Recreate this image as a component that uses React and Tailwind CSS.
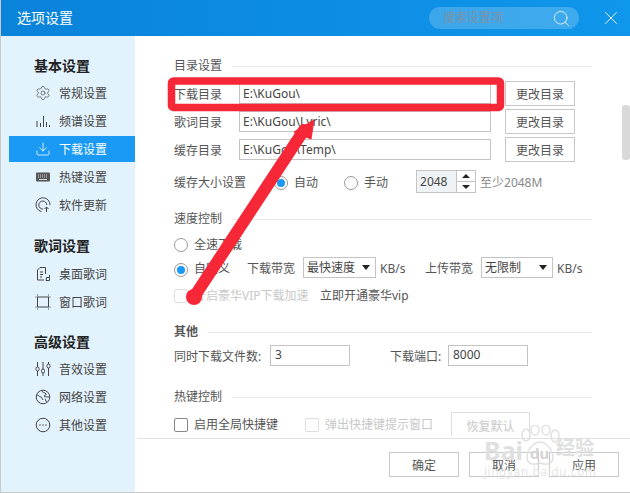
import { Settings, Download, Search, X } from "lucide-react";

const FONT = "font-['Noto_Sans','Noto_Sans_CJK_SC',sans-serif]";

function IconBars() {
  return (
    <svg width="16" height="16" viewBox="0 0 16 16" fill="none" stroke="currentColor">
      <path d="M2 8v6M5.5 10v4M8.5 3v11M11.5 9v5M14.5 12v2" />
    </svg>
  );
}

function IconKeyboard() {
  return (
    <svg width="16" height="16" viewBox="0 0 16 16" fill="none">
      <rect x="1" y="3.5" width="14" height="9" rx="1" fill="#555" />
      <path d="M3 6h10M3 8h10" stroke="#ddd" strokeDasharray="1 1" />
      <path d="M4 10.5h8" stroke="#ddd" />
    </svg>
  );
}

function IconUpdate() {
  return (
    <svg width="16" height="16" viewBox="0 0 16 16" fill="none" stroke="currentColor">
      <path d="M6.5 14.6A7 7 0 1 1 15 8" />
      <path d="M8 12A4 4 0 1 1 11.8 8" />
      <path d="M11.5 15v-5M9.5 12l2-2 2 2" />
    </svg>
  );
}

function IconLyric() {
  return (
    <svg width="16" height="16" viewBox="0 0 16 16" fill="none" stroke="currentColor">
      <path d="M9 14H2.5V4L5 1.5h5.5V8" />
      <path d="M5 6h3M5 8.5h3M5 11h2" />
      <path d="M11 14.5h3.5v-3h-3zM14.5 11V9" />
    </svg>
  );
}

function IconWindow() {
  return (
    <svg width="16" height="16" viewBox="0 0 16 16" fill="none" stroke="currentColor">
      <rect x="2.5" y="3" width="11" height="10" />
      <path d="M0.5 3h1M14.5 3h1M0.5 13h1M14.5 13h1M2.5 0.5v1M13.5 0.5v1M2.5 14.5v1M13.5 14.5v1" />
    </svg>
  );
}

function IconSliders() {
  return (
    <svg width="16" height="16" viewBox="0 0 16 16" fill="none" stroke="currentColor">
      <path d="M2.5 1v5M2.5 10v5M8 1v7M8 12v3M13.5 1v2M13.5 7v8" />
      <rect x="1" y="6" width="3" height="4" rx="1.5" />
      <rect x="6.5" y="8" width="3" height="4" rx="1.5" />
      <rect x="12" y="3" width="3" height="4" rx="1.5" />
    </svg>
  );
}

function IconGlobe() {
  return (
    <svg width="16" height="16" viewBox="0 0 16 16" fill="none" stroke="currentColor">
      <circle cx="8" cy="8" r="6.8" />
      <path d="M2 6c2 0 2 2 4 2 1 0 1 2 2 3M7 2c0 2 3 1 4 3 0 2-2 1-2 2s3 1 5 1M10 10l1.500 3" />
    </svg>
  );
}

function IconMore() {
  return (
    <svg width="16" height="16" viewBox="0 0 16 16" fill="none" stroke="currentColor">
      <circle cx="8" cy="8" r="6.8" />
      <path d="M4.500 8h1M7.500 8h1M10.500 8h1" strokeWidth="1.400" />
    </svg>
  );
}

const groups = [
  {
    title: "基本设置",
    className: "mt-[20px]",
    itemsClass: "mt-[4px]",
    items: [
      { label: "常规设置", icon: <Settings size={16} strokeWidth={1} /> },
      { label: "频谱设置", icon: <IconBars /> },
      { label: "下载设置", icon: <Download size={16} strokeWidth={1.2} />, active: true },
      { label: "热键设置", icon: <IconKeyboard /> },
      { label: "软件更新", icon: <IconUpdate /> },
    ],
  },
  {
    title: "歌词设置",
    className: "mt-[18px]",
    itemsClass: "mt-[5px]",
    items: [
      { label: "桌面歌词", icon: <IconLyric /> },
      { label: "窗口歌词", icon: <IconWindow /> },
    ],
  },
  {
    title: "高级设置",
    className: "mt-[17px]",
    itemsClass: "mt-[4px]",
    items: [
      { label: "音效设置", icon: <IconSliders /> },
      { label: "网络设置", icon: <IconGlobe /> },
      { label: "其他设置", icon: <IconMore /> },
    ],
  },
];

function Sidebar() {
  return (
    <div className="flex w-[134px] shrink-0 flex-col bg-[#e3f3fd]">
      {groups.map((group) => (
        <div key={group.title} className={group.className}>
          <div className="flex h-[20px] items-center pb-[2px] pl-[33px] text-[14px] font-bold text-[#222]">{group.title}</div>
          <div className={`${group.itemsClass} flex flex-col gap-[2px]`}>
            {group.items.map((item) => (
              <div
                key={item.label}
                className={`ml-[8px] flex h-[26px] items-center gap-[8px] pl-[26px] text-[12px] ${
                  item.active ? "bg-[#1a9af5] text-white" : "text-[#444]"
                }`}
              >
                {item.icon}
                <span className="pt-[2px]">{item.label}</span>
              </div>
            ))}
          </div>
        </div>
      ))}
    </div>
  );
}

function SectionTitle({ children, className = "" }) {
  return (
    <div className={`flex h-[20px] items-center gap-[10px] text-[12px] text-[#555] ${className}`}>
      <span className={`pt-[2px] ${children === "其他" ? "font-bold" : ""}`}>{children}</span>
      <div className="mt-[2px] h-px flex-1 bg-[#eaeaea]" />
    </div>
  );
}

function Radio({ checked, className = "" }) {
  return (
    <span className={`flex h-[14px] w-[14px] shrink-0 items-center justify-center rounded-full border border-[#999] bg-white ${className}`}>
      {checked && <span className="h-[8px] w-[8px] rounded-full bg-[#1a9af5]" />}
    </span>
  );
}

function Checkbox({ disabled }) {
  return (
    <span
      className={`h-[14px] w-[14px] shrink-0 rounded-[2px] border bg-white ${
        disabled ? "border-[#dedede]" : "border-[#888]"
      }`}
    />
  );
}

function Button({ children, className = "" }) {
  return (
    <div
      className={`flex h-[25px] w-[70px] shrink-0 items-center justify-center border border-[#c8c8c8] bg-white pt-[2px] text-[12px] text-[#555] ${className}`}
    >
      {children}
    </div>
  );
}

function DirRow({ label, value }) {
  return (
    <div className="flex h-[25px] items-center">
      <span className="w-[65px] pt-[2px] text-[12px] text-[#555]">{label}</span>
      <div className="flex h-[21px] w-[252px] items-center border border-[#c4c4c4] pl-[3px] text-[12px] text-[#444]">
        {value}
      </div>
      <Button className="ml-[14px]">更改目录</Button>
    </div>
  );
}

function Select({ value, className }) {
  return (
    <div className={`flex h-[21px] items-center justify-between border border-[#c4c4c4] pl-[3px] pr-[5px] text-[12px] text-[#444] ${className}`}>
      <span>{value}</span>
      <span className="h-0 w-0 border-x-[4px] border-t-[5px] border-x-transparent border-t-[#222]" />
    </div>
  );
}

function Annotation() {
  return (
    <svg className="pointer-events-none absolute left-0 top-0" width="630" height="493" viewBox="0 0 630 493" fill="none">
      <rect x="170.500" y="81" width="329" height="26.500" rx="2" stroke="#f62737" strokeWidth="7.500" />
      <path d="M193 297L303 130" stroke="#f62737" strokeWidth="12" strokeLinecap="round" />
      <circle cx="193" cy="297" r="8" fill="#f62737" />
      <path d="M313 120L293 132L310 139Z" fill="#f62737" stroke="#f62737" strokeLinejoin="round" />
    </svg>
  );
}

function Watermark() {
  return (
    <div className="pointer-events-none absolute left-[483px] top-[425px] h-[55px] w-[112px] text-[#e0e0e0]">
      <svg className="absolute left-[36px] top-0" width="40" height="42" viewBox="0 0 40 42" fill="none" stroke="#e0e0e0" strokeWidth="1.500">
        <ellipse cx="6" cy="10" rx="4" ry="6" />
        <ellipse cx="15" cy="5" rx="4" ry="5" />
        <ellipse cx="26" cy="5" rx="4" ry="5" />
        <ellipse cx="35" cy="11" rx="4" ry="6" />
        <path d="M20 17c-6 0-13 8-13 15 0 8 8 8 13 6 5 2 13 2 13-6 0-7-7-15-13-15z" />
      </svg>
      <span className="absolute left-0 top-[10px] text-[25px] font-bold leading-[30px]">Bai</span>
      <span className="absolute left-[46px] top-[18px] text-[15px] font-bold leading-[20px] text-[#d4d4d4]">du</span>
      <span className="absolute left-[72px] top-[11px] text-[19px] font-bold leading-[24px]">经验</span>
      <span className="absolute left-0 top-[40px] text-[12px] leading-[14px] tracking-[0.5px] text-[#e6e6e6]">jingyan.baidu.com</span>
    </div>
  );
}

export default function App() {
  return (
    <div className={`relative flex h-[493px] w-[630px] flex-col overflow-hidden border-b border-l border-[#c9c9c9] bg-white ${FONT}`}>
      <div className="flex h-[36px] shrink-0 items-center bg-gradient-to-r from-[#0a83da] to-[#0f97ec] pl-[16px] pr-[8px]">
        <span className="pb-[2px] text-[14px] text-white">选项设置</span>
        <div className="ml-auto flex h-[22px] w-[150px] items-center justify-between rounded-full bg-white/20 pl-[14px] pr-[8px] text-[12px] text-[#7c93a6]">
          <span>搜索设置项</span>
          <Search size={19} strokeWidth={1} className="text-white" />
        </div>
        <X size={22} strokeWidth={1} className="ml-[21px] text-white" />
      </div>

      <div className="flex min-h-0 flex-1">
        <Sidebar />

        <div className="flex min-w-0 flex-1 flex-col">
          <div className="h-[400px] overflow-hidden pl-[39px] pr-[38px] pt-[19px]">
            <SectionTitle>目录设置</SectionTitle>
            <div className="mt-[6px] flex flex-col gap-[3px]">
              <DirRow label="下载目录" value="E:\KuGou\" />
              <DirRow label="歌词目录" value="E:\KuGou\Lyric\" />
              <DirRow label="缓存目录" value="E:\KuGou\Temp\" />
            </div>

            <div className="mt-[8px] flex h-[23px] items-center text-[12px] text-[#555]">
              <span className="mt-[3px] w-[100px]">缓存大小设置</span>
              <Radio checked className="mt-[3px]" />
              <span className="ml-[6px] mt-[3px]">自动</span>
              <Radio className="ml-[26px] mt-[3px]" />
              <span className="ml-[6px] mt-[3px]">手动</span>
              <div className="ml-[28px] flex h-[23px] w-[60px] border border-[#c4c4c4]">
                <div className="flex flex-1 items-center bg-[#eff3f6] pl-[3px] text-[#444]">2048</div>
                <div className="flex w-[19px] flex-col border-l border-[#c4c4c4]">
                  <div className="flex flex-1 items-center justify-center border-b border-[#c4c4c4]">
                    <span className="h-0 w-0 border-x-[4px] border-b-[4px] border-x-transparent border-b-[#222]" />
                  </div>
                  <div className="flex flex-1 items-center justify-center">
                    <span className="h-0 w-0 border-x-[4px] border-t-[4px] border-x-transparent border-t-[#222]" />
                  </div>
                </div>
              </div>
              <span className="ml-[4px] mt-[3px] text-[#888]">至少2048M</span>
            </div>

            <SectionTitle className="mt-[15px]">速度控制</SectionTitle>
            <div className="mt-[7px] flex h-[20px] items-center gap-[6px] text-[12px] text-[#555]">
              <Radio />
              <span>全速下载</span>
            </div>
            <div className="mt-[2px] flex h-[21px] items-start text-[12px] text-[#555]">
              <Radio checked className="mt-[6px]" />
              <span className="ml-[6px] mt-[3px]">自定义</span>
              <span className="ml-[17px] mt-[3px]">下载带宽</span>
              <Select value="最快速度" className="ml-[8px] w-[73px]" />
              <span className="ml-[4px] mt-[3px] w-[45px]">KB/s</span>
              <span className="mt-[3px]">上传带宽</span>
              <Select value="无限制" className="ml-[8px] w-[72px]" />
              <span className="ml-[4px] mt-[3px]">KB/s</span>
            </div>
            <div className="mt-[9px] flex h-[18px] items-center text-[12px]">
              <Checkbox disabled />
              <span className="ml-[6px] w-[126px] text-[#c8c8c8]">开启豪华VIP下载加速</span>
              <span className="text-[#555]">立即开通豪华vip</span>
            </div>

            <SectionTitle className="mt-[16px]">其他</SectionTitle>
            <div className="mt-[4px] flex h-[21px] items-center text-[12px] text-[#555]">
              <span className="w-[96px] pt-[3px]">同时下载文件数:</span>
              <div className="flex h-[21px] w-[80px] items-center border border-[#c4c4c4] pb-[1px] pl-[4px] text-[#444]">3</div>
              <span className="ml-[40px] w-[58px] pt-[3px]">下载端口:</span>
              <div className="flex h-[21px] w-[80px] items-center border border-[#c4c4c4] pb-[1px] pl-[4px] text-[#444]">8000</div>
            </div>

            <SectionTitle className="mt-[20px]">热键控制</SectionTitle>
            <div className="mt-[6px] flex h-[30px] items-start text-[12px]">
              <div className="flex h-[26px] items-center gap-[6px] text-[#555]">
                <Checkbox />
                <span>启用全局快捷键</span>
              </div>
              <div className="ml-[27px] flex h-[26px] items-center gap-[6px] text-[#c8c8c8]">
                <Checkbox disabled />
                <span>弹出快捷键提示窗口</span>
              </div>
              <div className="ml-[18px] flex h-[30px] w-[79px] justify-center border border-[#dedede] pt-[5px] text-[#c8c8c8]">恢复默认</div>
            </div>
          </div>

          <div className="ml-[2px] mt-[2px] flex flex-1 items-start justify-end gap-[10px] border-t border-[#e2e2e2] pr-[11px] pt-[13px]">
            <Button>确定</Button>
            <Button>取消</Button>
            <Button>应用</Button>
          </div>
        </div>
      </div>

      <div className="absolute right-0 top-[105px] h-[55px] w-[8px] rounded-[3px] bg-[#d9d9d9]" />
      <Watermark />
      <Annotation />
    </div>
  );
}
